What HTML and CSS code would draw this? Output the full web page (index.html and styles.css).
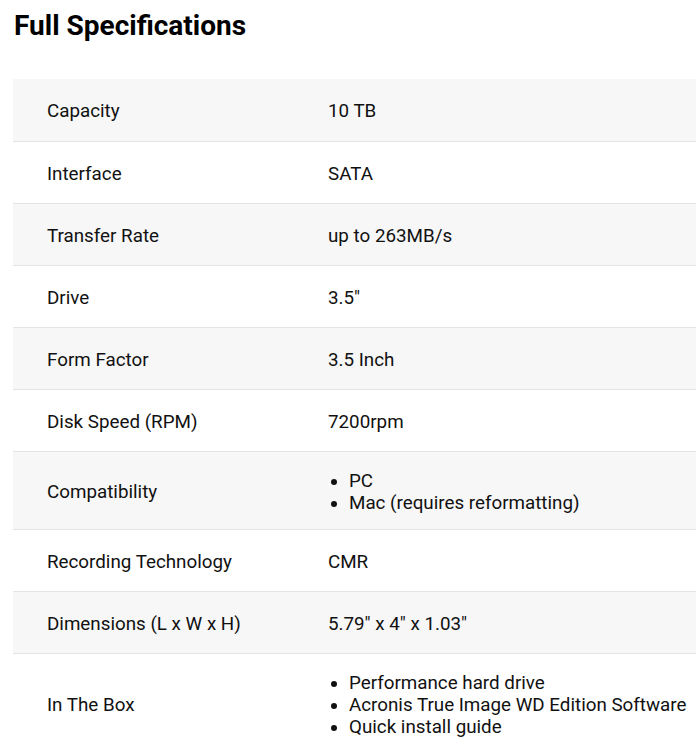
FILE: index.html
```html
<!DOCTYPE html>
<html>
<head>
<meta charset="utf-8">
<link rel="stylesheet" href="styles.css">
</head>
<body>
<div class="page">
  <h2 class="title">Full Specifications</h2>
  <table class="specs">
    <tbody>
      <tr><td class="label">Capacity</td><td class="value">10 TB</td></tr>
      <tr><td class="label">Interface</td><td class="value">SATA</td></tr>
      <tr><td class="label">Transfer Rate</td><td class="value">up to 263MB/s</td></tr>
      <tr><td class="label">Drive</td><td class="value">3.5"</td></tr>
      <tr><td class="label">Form Factor</td><td class="value">3.5 Inch</td></tr>
      <tr><td class="label">Disk Speed (RPM)</td><td class="value">7200rpm</td></tr>
      <tr><td class="label">Compatibility</td><td class="value"><ul class="list"><li>PC</li><li>Mac (requires reformatting)</li></ul></td></tr>
      <tr><td class="label">Recording Technology</td><td class="value">CMR</td></tr>
      <tr><td class="label">Dimensions (L x W x H)</td><td class="value">5.79" x 4" x 1.03"</td></tr>
      <tr><td class="label">In The Box</td><td class="value"><ul class="list"><li>Performance hard drive</li><li>Acronis True Image WD Edition Software</li><li>Quick install guide</li></ul></td></tr>
    </tbody>
  </table>
</div>
</body>
</html>
```
FILE: styles.css
```css
html, body {
  margin: 0;
  padding: 0;
  background: #fff;
}
body {
  font-family: Roboto, "Liberation Sans", sans-serif;
  color: #111;
}
.page {
  padding: 7px 0 0 13px;
}
.title {
  margin: 0 0 0 1px;
  font-size: 28px;
  font-weight: 700;
  line-height: 38px;
  color: #000;
}
.specs {
  margin-top: 34px;
  width: 683px;
  border-collapse: collapse;
  font-size: 18.8px;
  line-height: 22px;
}
.specs tr {
  height: 62px;
  border-bottom: 1px solid #e4e4e4;
}
.specs tr:nth-child(odd) {
  background: #f7f7f7;
}
.specs td {
  padding: 18px 0 15px;
  vertical-align: middle;
}
.label {
  width: 281px;
  padding-left: 34px !important;
}
.list {
  margin: 0;
  padding-left: 21px;
}
```
